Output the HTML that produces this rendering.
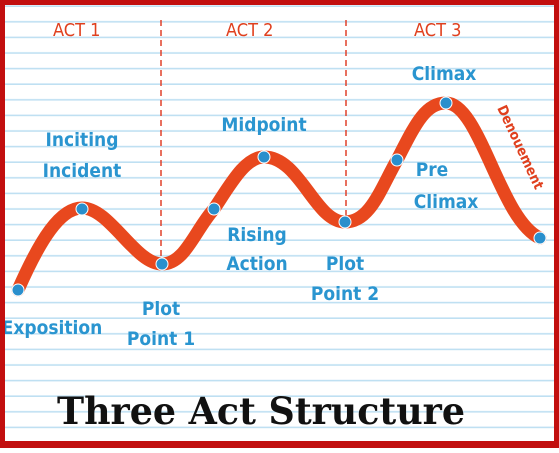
<!DOCTYPE html>
<html><head><style>
html,body{margin:0;padding:0}
body{width:559px;height:448px;overflow:hidden;background:#fff}
</style></head><body>
<svg width="559" height="448" viewBox="0 0 559 448" xmlns="http://www.w3.org/2000/svg">
<defs>
<pattern id="lines" x="0" y="7" width="559" height="15.6" patternUnits="userSpaceOnUse">
<rect x="0" y="14" width="559" height="2" fill="#bfe0f2"/>
</pattern>
</defs>
<rect width="559" height="448" fill="#fff"/>
<rect width="559" height="448" fill="url(#lines)"/>
<line x1="161" y1="20" x2="161" y2="258" stroke="#e0402a" stroke-width="1.5" stroke-dasharray="6,4"/>
<line x1="346" y1="20" x2="346" y2="216" stroke="#e0402a" stroke-width="1.5" stroke-dasharray="6,4"/>
<g font-family="'DejaVu Sans Condensed','Liberation Sans Narrow',sans-serif" fill="#e0401e" font-size="18">
<text x="53" y="36">ACT 1</text>
<text x="226" y="36">ACT 2</text>
<text x="414" y="36">ACT 3</text>
</g>
<path d="M18,290 C40,240 60,208 82,208 C110,208 135,264 162,264 C185,264 195,230 214,209 C230,185 245,157 264,157 C300,157 315,222 345,222 C370,222 380,190 397,160 C415,125 425,103 446,103 C480,103 500,220 540,238" fill="none" stroke="#e8481e" stroke-width="13" stroke-linecap="round"/>
<g fill="#2a8fcc" stroke="#fff" stroke-width="1">
<circle cx="18" cy="290" r="6"/><circle cx="82" cy="209" r="6"/><circle cx="162" cy="264" r="6"/><circle cx="214" cy="209" r="6"/><circle cx="264" cy="157" r="6"/><circle cx="345" cy="222" r="6"/><circle cx="397" cy="160" r="6"/><circle cx="446" cy="103" r="6"/><circle cx="540" cy="238" r="6"/>
</g>
<g font-family="'DejaVu Sans Condensed','Liberation Sans Narrow',sans-serif" fill="#2a95d0" font-size="19" font-weight="bold" text-anchor="middle">
<text x="82" y="146">Inciting</text><text x="82" y="177">Incident</text>
<text x="264" y="131">Midpoint</text>
<text x="257" y="241">Rising</text><text x="257" y="270">Action</text>
<text x="345" y="270">Plot</text><text x="345" y="300">Point 2</text>
<text x="161" y="315">Plot</text><text x="161" y="345">Point 1</text>
<text x="52" y="334">Exposition</text>
<text x="444" y="80">Climax</text>
<text x="432" y="176">Pre</text><text x="446" y="208">Climax</text>
</g>
<text transform="translate(497,108) rotate(65)" font-family="'DejaVu Sans Condensed',sans-serif" font-weight="bold" font-size="14" fill="#e0401e">Denouement</text>
<text x="261" y="424" text-anchor="middle" font-family="'DejaVu Serif','Liberation Serif',serif" font-weight="bold" font-size="37" fill="#111" textLength="408" lengthAdjust="spacingAndGlyphs">Three Act Structure</text>
<rect x="2.5" y="2.5" width="554" height="441" fill="none" stroke="#c20f0f" stroke-width="5"/>
<rect x="0" y="442" width="559" height="6" fill="#c20f0f"/>
</svg>
</body></html>
